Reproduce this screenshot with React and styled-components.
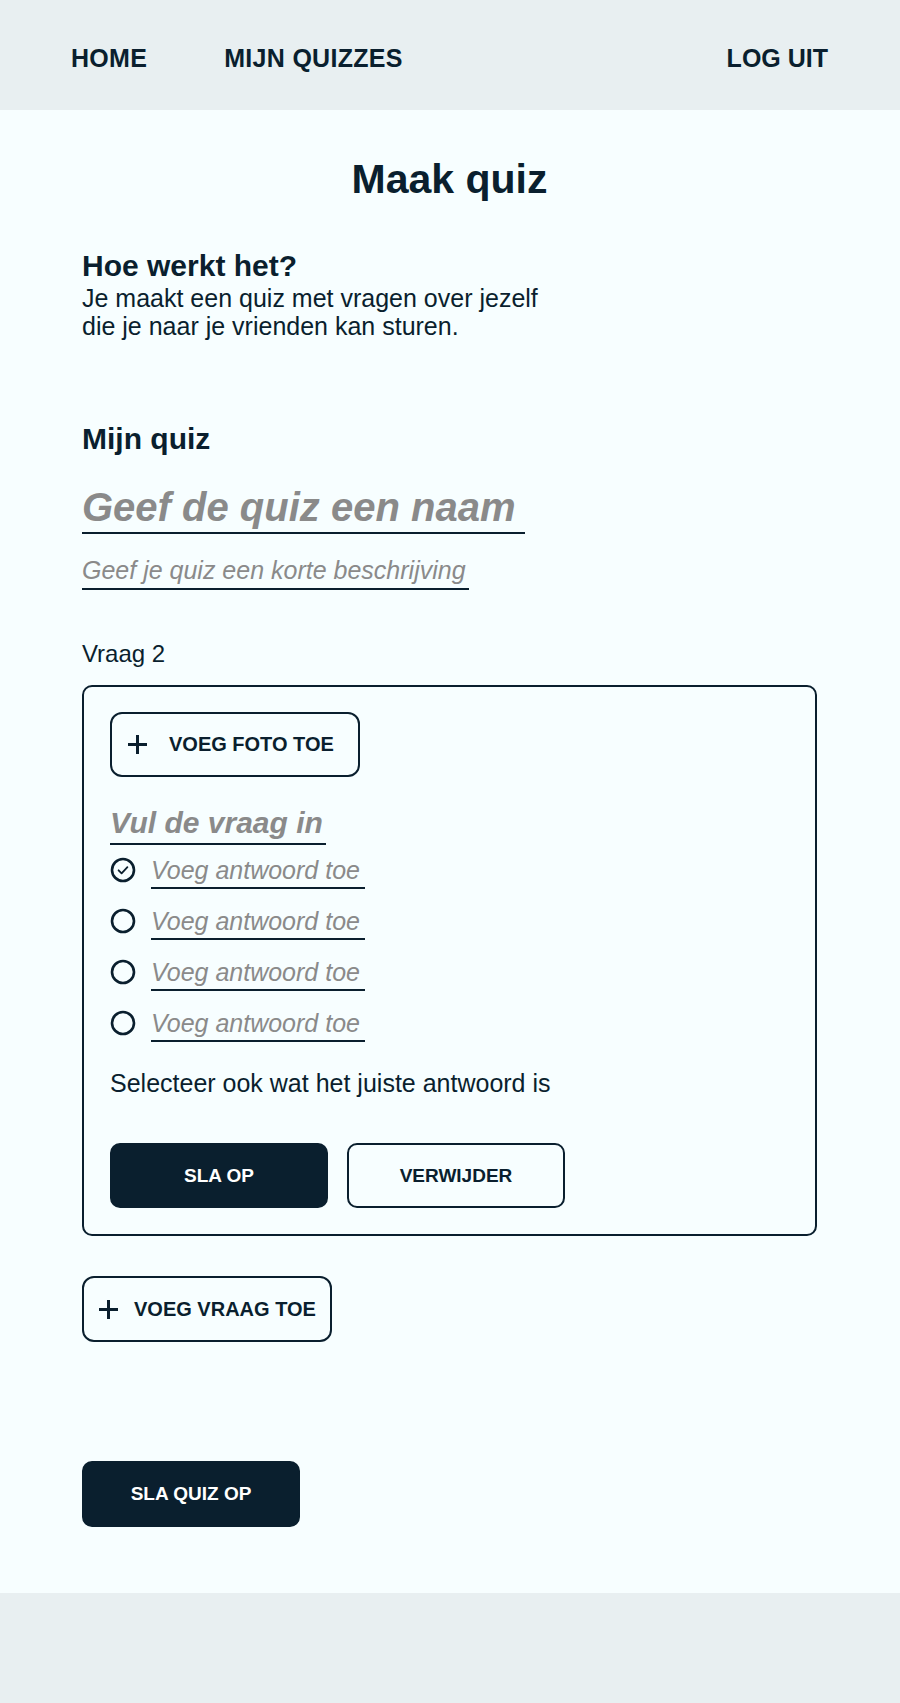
import React from "react";
import styled, { createGlobalStyle } from "styled-components";

const DARK = "#0a1f2e";
const GRAY = "#8a8a8a";

const Global = createGlobalStyle`
  html, body { margin: 0; padding: 0; }
  body {
    background: #f7feff;
    font-family: "Liberation Sans", Arial, sans-serif;
    color: ${DARK};
  }
  * { box-sizing: border-box; }
`;

const Page = styled.div`
  min-height: 1703px;
  display: flex;
  flex-direction: column;
`;

const Header = styled.header`
  height: 110px;
  background: #e8eff1;
  display: flex;
  align-items: center;
  padding: 6px 72px 0 71px;
`;

const NavLink = styled.a`
  font-size: 25px;
  font-weight: 700;
  color: ${DARK};
  text-decoration: none;
  letter-spacing: ${(p) => (p.$push ? 0 : 0.3)}px;
  margin-right: ${(p) => p.$gap || 0}px;
  margin-left: ${(p) => (p.$push ? "auto" : "0")};
`;

const Main = styled.main`
  flex: 1;
  padding: 45px 83px 66px 82px;
  display: flex;
  flex-direction: column;
`;

const Title = styled.h1`
  margin: 0;
  text-align: center;
  font-size: 41px;
  line-height: 48px;
  font-weight: 700;
`;

const Heading = styled.h2`
  margin: ${(p) => p.$top}px 0 0;
  font-size: 30px;
  line-height: 34px;
  font-weight: 700;
`;

const Text = styled.p`
  margin: ${(p) => p.$top || 0}px 0 0;
  font-size: ${(p) => p.$size || 25}px;
  line-height: 28px;
`;

const LineInput = styled.input`
  display: block;
  width: ${(p) => p.$w}px;
  margin: ${(p) => p.$top || 0}px 0 0;
  padding: 0 0 ${(p) => p.$pb || 2}px;
  border: none;
  border-bottom: 2px solid ${DARK};
  background: transparent;
  font-family: "Liberation Sans", Arial, sans-serif;
  font-size: ${(p) => p.$size}px;
  line-height: ${(p) => p.$lh}px;
  height: ${(p) => p.$lh + (p.$pb || 2) + 2}px;
  font-weight: ${(p) => (p.$bold ? 700 : 400)};
  font-style: italic;
  color: ${DARK};
  outline: none;
  &::placeholder {
    color: ${GRAY};
    opacity: 1;
  }
`;

const Card = styled.section`
  margin-top: 17px;
  border: 2px solid ${DARK};
  border-radius: 10px;
  padding: 25px 26px 26px;
  display: flex;
  flex-direction: column;
  align-items: flex-start;
`;

const OutlineButton = styled.button`
  display: flex;
  align-items: center;
  gap: ${(p) => p.$gap}px;
  width: 250px;
  height: ${(p) => p.$h || 65}px;
  margin-top: ${(p) => p.$top || 0}px;
  padding: 0 0 0 ${(p) => p.$pl}px;
  border: 2px solid ${DARK};
  border-radius: 12px;
  background: transparent;
  color: ${DARK};
  font-family: "Liberation Sans", Arial, sans-serif;
  font-size: 20px;
  font-weight: 700;
  cursor: pointer;
`;

const Answers = styled.div`
  margin-top: 10px;
  display: flex;
  flex-direction: column;
  gap: 17px;
`;

const AnswerRow = styled.div`
  display: flex;
  align-items: center;
  gap: 15px;
`;

const RadioIcon = styled.svg`
  width: 26px;
  height: 26px;
  flex: none;
  margin-bottom: 4px;
`;

const ButtonRow = styled.div`
  margin-top: 46px;
  display: flex;
  gap: 19px;
`;

const ActionButton = styled.button`
  width: 218px;
  height: ${(p) => p.$h || 65}px;
  margin-top: ${(p) => p.$top || 0}px;
  border: 2px solid ${DARK};
  border-radius: 10px;
  background: ${(p) => (p.$filled ? DARK : "transparent")};
  color: ${(p) => (p.$filled ? "#ffffff" : DARK)};
  font-family: "Liberation Sans", Arial, sans-serif;
  font-size: 19px;
  font-weight: 700;
  cursor: pointer;
`;

const Footer = styled.footer`
  height: 112px;
  background: #e8eff1;
`;

function Plus() {
  return (
    <svg width="21" height="21" viewBox="0 0 21 21" fill="none">
      <path d="M10.5 1v19M1 10.5h19" stroke={DARK} strokeWidth="3" />
    </svg>
  );
}

function Radio({ checked }) {
  return (
    <RadioIcon viewBox="0 0 26 26" fill="none">
      <circle cx="13" cy="13" r="11" stroke={DARK} strokeWidth="2.6" />
      {checked && (
        <path
          d="M8.6 13.3l3 3 5.8-6.2"
          stroke={DARK}
          strokeWidth="1.8"
          strokeLinecap="round"
          strokeLinejoin="round"
        />
      )}
    </RadioIcon>
  );
}

export default function App() {
  return (
    <Page>
      <Global />
      <Header>
        <NavLink href="#" $gap={77}>HOME</NavLink>
        <NavLink href="#">MIJN QUIZZES</NavLink>
        <NavLink href="#" $push>LOG UIT</NavLink>
      </Header>
      <Main>
        <Title>Maak quiz</Title>
        <Heading $top={46}>Hoe werkt het?</Heading>
        <Text $top={1}>
          Je maakt een quiz met vragen over jezelf
          <br />
          die je naar je vrienden kan sturen.
        </Text>

        <Heading $top={82}>Mijn quiz</Heading>
        <LineInput
          $top={28}
          $w={443}
          $size={40}
          $lh={46}
          $bold
          placeholder="Geef de quiz een naam"
        />
        <LineInput
          $top={20}
          $w={387}
          $size={25}
          $lh={32}
          placeholder="Geef je quiz een korte beschrijving"
        />

        <Text $top={50} $size={24}>Vraag 2</Text>
        <Card>
          <OutlineButton $pl={15} $gap={21}>
            <Plus />
            VOEG FOTO TOE
          </OutlineButton>
          <LineInput
            $top={28}
            $w={216}
            $size={30}
            $lh={36}
            $bold
            placeholder="Vul de vraag in"
          />
          <Answers>
            {[true, false, false, false].map((c, i) => (
              <AnswerRow key={i}>
                <Radio checked={c} />
                <LineInput
                  $w={214}
                  $size={25}
                  $lh={30}
                  placeholder="Voeg antwoord toe"
                />
              </AnswerRow>
            ))}
          </Answers>
          <Text $top={27}>Selecteer ook wat het juiste antwoord is</Text>
          <ButtonRow>
            <ActionButton $filled>SLA OP</ActionButton>
            <ActionButton>VERWIJDER</ActionButton>
          </ButtonRow>
        </Card>

        <OutlineButton $top={40} $h={66} $pl={14} $gap={15}>
          <Plus />
          VOEG VRAAG TOE
        </OutlineButton>

        <ActionButton $filled $top={119} $h={66}>SLA QUIZ OP</ActionButton>
      </Main>
      <Footer />
    </Page>
  );
}
